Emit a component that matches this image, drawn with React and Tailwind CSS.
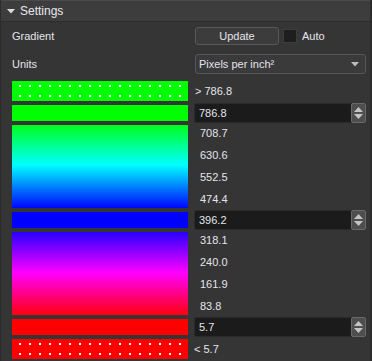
import React from "react";

const font = { fontFamily: '"Liberation Sans", Arial, sans-serif' };

function Dotted({ color, id }) {
  return (
    <svg width="176" height="20" className="block">
      <defs>
        <pattern id={id} width="10" height="10" patternUnits="userSpaceOnUse" x="7" y="4">
          <rect width="2" height="2" fill="#ffffff" />
        </pattern>
      </defs>
      <rect width="176" height="20" fill={color} />
      <rect width="176" height="20" fill={`url(#${id})`} />
    </svg>
  );
}

function SpinInput({ value }) {
  return (
    <div className="flex h-[20px] items-center rounded-[2px] border border-[#2a2a2a] bg-[#1b1b1b]">
      <span className="flex-1 pl-[4px] text-[11px] leading-none text-[#e4e4ec]">{value}</span>
      <div className="mr-[-1px] flex h-[20px] w-[15px] flex-col items-center justify-center gap-[2px] rounded-[2px] border border-[#6a6a6a] bg-[#4e4e4e]">
        <svg width="9" height="5" className="block">
          <polygon points="0,5 4.5,0 9,5" fill="#c4c4c4" />
        </svg>
        <svg width="9" height="5" className="block">
          <polygon points="0,0 9,0 4.5,5" fill="#c4c4c4" />
        </svg>
      </div>
    </div>
  );
}

function Labels({ items }) {
  return (
    <div className="flex h-[87px] flex-col justify-around pl-[6px]">
      {items.map((t) => (
        <span key={t} className="text-[11px] leading-none text-[#e4e4ec]">{t}</span>
      ))}
    </div>
  );
}

export default function App() {
  return (
    <div
      style={font}
      className="flex h-[361px] w-[372px] flex-col overflow-hidden border-l border-r-2 border-[#2c2c2c] bg-[#353535] text-[#e4e4ec]"
    >
      <div className="flex h-[22px] shrink-0 items-center border-b border-t border-[#2c2c2c] border-t-[#4a4a4a] bg-[#3d3d3d]">
        <svg width="8" height="5" className="ml-[6px] block">
          <polygon points="0,0 8,0 4,4.5" fill="#dcdcdc" />
        </svg>
        <span className="ml-[5px] text-[12px] leading-none text-[#e8e8f0]">Settings</span>
      </div>

      <div className="flex flex-col pl-[11px] pr-[4px] pt-[5px]">
        <div className="grid h-[18px] grid-cols-[176px_1fr] items-center gap-x-[6px]">
          <span className="text-[11px] leading-none">Gradient</span>
          <div className="flex items-center">
            <div className="ml-px flex h-[18px] w-[84px] items-center justify-center rounded-[3px] border border-[#585858] bg-[#3c3c3c] text-[11px] leading-none">
              Update
            </div>
            <div className="ml-[4px] h-[14px] w-[14px] border border-[#3c3c3c] bg-[#1e1e1e]" />
            <span className="ml-[5px] text-[11px] leading-none">Auto</span>
          </div>
        </div>

        <div className="mt-[9px] grid h-[20px] grid-cols-[176px_1fr] items-center gap-x-[6px]">
          <span className="text-[11px] leading-none">Units</span>
          <div className="ml-px flex h-[20px] items-center justify-between rounded-[3px] border border-[#575757] bg-[#3a3a3a] pl-[3px] pr-[6px]">
            <span className="text-[11px] leading-none">Pixels per inch²</span>
            <svg width="8" height="5" className="block">
              <polygon points="0,0 8,0 4,4.5" fill="#bcbcbc" />
            </svg>
          </div>
        </div>

        <div className="mt-[5px] grid grid-cols-[176px_1fr] gap-x-[6px]">
          <div className="flex h-[24px] items-center">
            <Dotted color="#00ff00" id="dg" />
          </div>
          <div className="flex items-center pl-px text-[11px] leading-none">&gt; 786.8</div>

          <div className="flex h-[20px] items-center">
            <div className="h-[16px] w-full bg-[#00ff00]" />
          </div>
          <SpinInput value="786.8" />

          <div className="flex h-[87px] items-center">
            <div className="h-[83px] w-full bg-[linear-gradient(to_bottom,#00ff1c_0%,#00ffff_48%,#0006ff_100%)]" />
          </div>
          <Labels items={["708.7", "630.6", "552.5", "474.4"]} />

          <div className="flex h-[20px] items-center">
            <div className="h-[16px] w-full bg-[#0000ff]" />
          </div>
          <SpinInput value="396.2" />

          <div className="flex h-[87px] items-center">
            <div className="h-[83px] w-full bg-[linear-gradient(to_bottom,#2600ff_0%,#ff00ff_49%,#ff0010_100%)]" />
          </div>
          <Labels items={["318.1", "240.0", "161.9", "83.8"]} />

          <div className="flex h-[20px] items-center">
            <div className="h-[16px] w-full bg-[#ff0000]" />
          </div>
          <SpinInput value="5.7" />

          <div className="flex h-[24px] items-center">
            <Dotted color="#ff0000" id="dr" />
          </div>
          <div className="flex items-center text-[11px] leading-none">&lt; 5.7</div>
        </div>
      </div>
    </div>
  );
}
